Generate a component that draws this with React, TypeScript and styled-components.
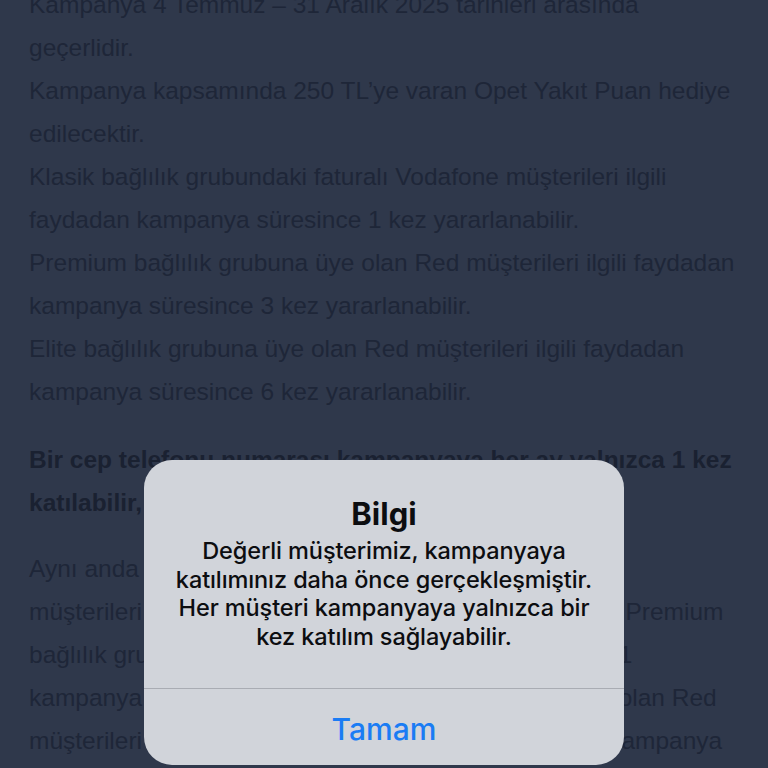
import styled, { createGlobalStyle } from "styled-components";

const GlobalStyle = createGlobalStyle`
  html, body {
    margin: 0;
    padding: 0;
    width: 768px;
    height: 768px;
    overflow: hidden;
    background: #2f384b;
  }
`;

// PAGE
const Screen = styled.div`
  position: relative;
  width: 768px;
  height: 768px;
  overflow: hidden;
  background: #2f384b;
`;

const Content = styled.div`
  padding: 0 29px;
  margin-top: -17px;
  font-family: "Liberation Sans", Arial, sans-serif;
  font-size: 24.5px;
  line-height: 43px;
  color: #1e2638;
`;

const Paragraph = styled.p<{ $bold?: boolean; $gap?: number }>`
  margin: 0 0 ${(p) => p.$gap ?? 0}px;
  font-weight: ${(p) => (p.$bold ? 700 : 400)};
  color: ${(p) => (p.$bold ? "#1a2131" : "#1e2638")};
  white-space: nowrap;
`;

const Line = styled.span`
  display: block;
`;

// ALERT
const Backdrop = styled.div`
  position: absolute;
  inset: 0;
  display: flex;
  justify-content: center;
  align-items: flex-start;
  padding-top: 460px;
`;

const Alert = styled.div`
  width: 480px;
  height: 305px;
  border-radius: 28px;
  background: #d1d4da;
  display: flex;
  flex-direction: column;
  font-family: Inter, "Open Sans", sans-serif;
  color: #0c0d10;
  overflow: hidden;
`;

const AlertBody = styled.div`
  flex: 1;
  display: flex;
  flex-direction: column;
  align-items: center;
  padding: 36px 10px 0;
  text-align: center;
`;

const Title = styled.h2`
  margin: 0 0 5px;
  font-size: 31px;
  line-height: 36px;
  font-weight: 700;
`;

const Message = styled.p`
  margin: 0;
  font-size: 23.5px;
  line-height: 28.7px;
  font-weight: 500;
  letter-spacing: -0.1px;
`;

const ActionButton = styled.button`
  height: 77px;
  border: none;
  border-top: 1px solid #a9acb3;
  background: transparent;
  font-family: Inter, "Open Sans", sans-serif;
  font-size: 30px;
  font-weight: 500;
  color: #1a7cf4;
  padding: 4px 0 0;
  cursor: pointer;
`;

const terms = [
  [
    "Kampanya 4 Temmuz – 31 Aralık 2025 tarihleri arasında",
    "geçerlidir.",
  ],
  [
    "Kampanya kapsamında 250 TL’ye varan Opet Yakıt Puan hediye",
    "edilecektir.",
  ],
  [
    "Klasik bağlılık grubundaki faturalı Vodafone müşterileri ilgili",
    "faydadan kampanya süresince 1 kez yararlanabilir.",
  ],
  [
    "Premium bağlılık grubuna üye olan Red müşterileri ilgili faydadan",
    "kampanya süresince 3 kez yararlanabilir.",
  ],
  [
    "Elite bağlılık grubuna üye olan Red müşterileri ilgili faydadan",
    "kampanya süresince 6 kez yararlanabilir.",
  ],
];

const App = () => {
  return (
    <Screen>
      <GlobalStyle />
      <Content>
        {terms.map((lines, i) => (
          <Paragraph key={i} $gap={i === terms.length - 1 ? 25 : 0}>
            {lines.map((l) => (
              <Line key={l}>{l}</Line>
            ))}
          </Paragraph>
        ))}
        <Paragraph $bold $gap={23}>
          <Line>Bir cep telefonu numarası kampanyaya her ay yalnızca 1 kez</Line>
          <Line>katılabilir, aynı ay içinde tekrar katılım sağlanamaz.</Line>
        </Paragraph>
        <Paragraph>
          <Line>Aynı anda birden fazla hattı bulunan Klasik</Line>
          <Line>müşterileri her hat için ayrı ayrı kampanyaya katılabilir. Premium</Line>
          <Line>bağlılık grubundaki Red müşterileri ise her ay en fazla 1</Line>
          <Line>kampanya süresince 1 kez katılabilir. Elit grubuna üye olan Red</Line>
          <Line>müşterileri ise ilgili faydadan her ay en fazla 3 kez bu kampanya</Line>
        </Paragraph>
      </Content>
      <Backdrop>
        <Alert>
          <AlertBody>
            <Title>Bilgi</Title>
            <Message>
              Değerli müşterimiz, kampanyaya
              <br />
              katılımınız daha önce gerçekleşmiştir.
              <br />
              Her müşteri kampanyaya yalnızca bir
              <br />
              kez katılım sağlayabilir.
            </Message>
          </AlertBody>
          <ActionButton>Tamam</ActionButton>
        </Alert>
      </Backdrop>
    </Screen>
  );
};

export default App;
